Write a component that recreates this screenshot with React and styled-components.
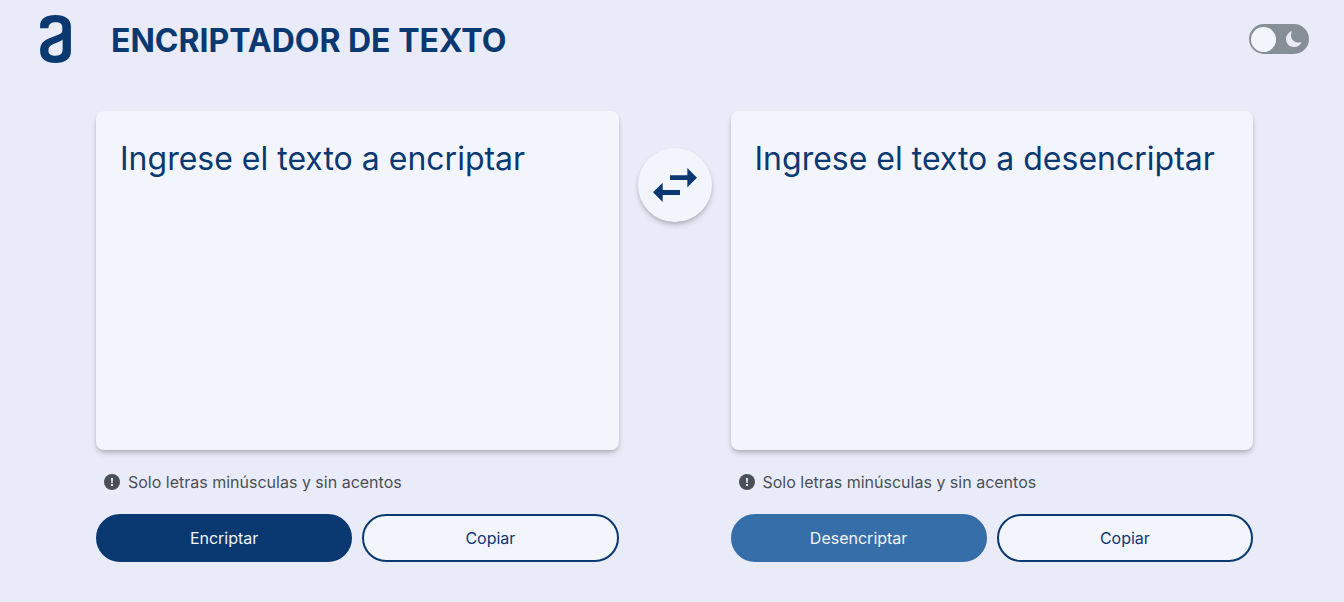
import React, { useState } from "react";
import styled, { createGlobalStyle } from "styled-components";

const navy = "#0a3871";
const surface = "#f3f5fc";
const shadow = "0 4px 6px -1px rgba(0, 0, 0, 0.16), 0 2px 4px -1px rgba(0, 0, 0, 0.18)";

const GlobalStyle = createGlobalStyle`
  *, *::before, *::after { box-sizing: border-box; }
  body {
    margin: 0;
    background: #e9ebf8;
    color: ${navy};
    font-family: Inter, "Liberation Sans", sans-serif;
  }
`;

const Header = styled.header`
  display: flex;
  align-items: center;
  gap: 40px;
  padding: 15px 35px 0 40px;
`;

const Logo = styled.svg`
  width: 31px;
  height: 48px;
  fill: ${navy};
`;

const Title = styled.h1`
  flex: 1;
  margin: 0;
  padding-top: 4px;
  font-size: 32px;
  line-height: 40px;
  font-weight: 700;
`;

const Switch = styled.label`
  position: relative;
  display: block;
  width: 60px;
  height: 30px;
  border-radius: 15px;
  background: #868e96;
  cursor: pointer;

  &:focus-within { outline: 2px solid ${navy}; }
`;

const SwitchInput = styled.input`
  position: absolute;
  inset: 0;
  width: 100%;
  height: 100%;
  margin: 0;
  opacity: 0;
  cursor: pointer;
`;

const Knob = styled.span`
  position: absolute;
  top: 3px;
  left: ${(p) => (p.$on ? 32 : 2)}px;
  width: 25px;
  height: 25px;
  border-radius: 50%;
  background: ${surface};
  pointer-events: none;
`;

const Moon = styled.svg`
  position: absolute;
  top: 7px;
  left: ${(p) => (p.$on ? 8 : 37)}px;
  width: 16px;
  height: 16px;
  fill: #e9ebf8;
  pointer-events: none;
`;

const Main = styled.main`
  display: grid;
  grid-template-columns: minmax(0, 1fr) 74px minmax(0, 1fr);
  column-gap: 19px;
  align-items: start;
  padding: 48px 91px 40px 96px;
`;

const Panel = styled.section`
  display: flex;
  flex-direction: column;
`;

const TextBox = styled.textarea`
  display: block;
  width: 100%;
  height: 339px;
  padding: 28px 24px;
  border: 0;
  border-radius: 8px;
  background: ${surface};
  box-shadow: ${shadow};
  color: ${navy};
  font: 400 32px/40px Inter, "Liberation Sans", sans-serif;
  resize: none;

  &::placeholder { color: ${navy}; opacity: 1; }
`;

const Hint = styled.p`
  display: flex;
  align-items: center;
  gap: 8px;
  margin: 20px 0 20px 8px;
  color: #495057;
  font-size: 16px;
  line-height: 24px;
  font-weight: 400;
`;

const HintIcon = styled.svg`
  width: 16px;
  height: 16px;
  flex: none;
`;

const Actions = styled.div`
  display: grid;
  grid-template-columns: 1fr 1fr;
  gap: 10px;
`;

const Button = styled.button`
  height: 48px;
  padding: 0 16px;
  border: 2px solid ${(p) => p.$fill || navy};
  border-radius: 24px;
  background: ${(p) => p.$fill || surface};
  color: ${(p) => (p.$fill ? surface : navy)};
  font: 400 16px/24px Inter, "Liberation Sans", sans-serif;
  cursor: pointer;
`;

const SwapButton = styled.button`
  display: flex;
  align-items: center;
  justify-content: center;
  width: 74px;
  height: 74px;
  margin-top: 37px;
  padding: 0;
  border: 0;
  border-radius: 50%;
  background: ${surface};
  box-shadow: ${shadow};
  cursor: pointer;
`;

const SwapIcon = styled.svg`
  width: 44px;
  height: 34px;
  fill: ${navy};
`;

function TextPanel({ id, placeholder, action, fill }) {
  const [text, setText] = useState("");
  return (
    <Panel>
      <TextBox
        id={id}
        aria-label={placeholder}
        aria-describedby={`${id}-hint`}
        placeholder={placeholder}
        value={text}
        onChange={(e) => setText(e.target.value)}
      />
      <Hint id={`${id}-hint`}>
        <HintIcon viewBox="0 0 16 16" aria-hidden="true">
          <circle cx="8" cy="8" r="8" fill="#495057" />
          <path d="M7 4h2l-.3 5H7.300zM7 10h2v2H7z" fill="#e9ebf8" />
        </HintIcon>
        Solo letras minúsculas y sin acentos
      </Hint>
      <Actions>
        <Button type="button" $fill={fill}>{action}</Button>
        <Button type="button">Copiar</Button>
      </Actions>
    </Panel>
  );
}

export default function App() {
  const [dark, setDark] = useState(false);
  return (
    <>
      <GlobalStyle />
      <Header>
        <Logo viewBox="30 29 93 145" aria-hidden="true">
          <path
            fillRule="evenodd"
            d="M30 69V61C30 40 48 29 76 29C106 29 123 41 123 63V140C123 162 105 174 77 174C48 174 30 162 30 138C30 117 38 107 58 99L85 89C94 85 97 82 97 76V67C97 56 91 51 77 51C63 51 56 57 55 69ZM98 103C95 106 90 109 84 111L72 116C60 121 55 127 55 136C55 147 62 152 77 152C91 152 98 146 98 132Z"
          />
        </Logo>
        <Title>ENCRIPTADOR DE TEXTO</Title>
        <Switch>
          <SwitchInput
            type="checkbox"
            role="switch"
            aria-label="Modo oscuro"
            checked={dark}
            onChange={(e) => setDark(e.target.checked)}
          />
          <Knob $on={dark} />
          <Moon $on={dark} viewBox="0 0 16 16" aria-hidden="true">
            <path d="M6 0C3 1 0 4 0 8C0 12.500 3.500 16 8 16C11.500 16 14.500 14 15.500 11C14.500 11.500 13.500 11.600 12.500 11.600C8.500 11.600 5 8.500 5 4.500C5 3 5.300 1.300 6 0Z" />
          </Moon>
        </Switch>
      </Header>
      <Main>
        <TextPanel id="encriptar" placeholder="Ingrese el texto a encriptar" action="Encriptar" fill={navy} />
        <SwapButton type="button" aria-label="Intercambiar textos">
          <SwapIcon viewBox="69 84 132 102" aria-hidden="true">
            <path d="M120 106H172V84L201 113L172 142V120H120ZM150 150H98V128L69 157L98 186V165H150Z" />
          </SwapIcon>
        </SwapButton>
        <TextPanel id="desencriptar" placeholder="Ingrese el texto a desencriptar" action="Desencriptar" fill="#366ea9" />
      </Main>
    </>
  );
}
